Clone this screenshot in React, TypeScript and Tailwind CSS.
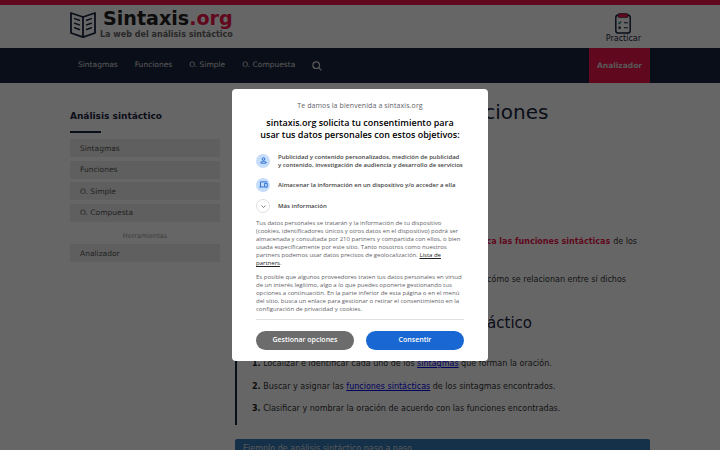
import { ReactNode } from 'react'

const navItems = ['Sintagmas', 'Funciones', 'O. Simple', 'O. Compuesta']

const BookLogo = () => (
  <svg className="h-[26px] w-[26px]" viewBox="0 0 26 26" fill="none" stroke="#1b2540" strokeWidth="1.8" strokeLinejoin="round">
    <path d="M13 5 1 1v20l12 4.200L25 21V1z" />
    <path d="M13 5v20" />
    <path d="m4.600 6.600 4.800 1.700M4.600 11.200l4.800 1.700M4.600 15.800l4.800 1.700M21.400 6.600l-4.800 1.700M21.400 11.200l-4.800 1.700M21.400 15.800l-4.800 1.700" strokeLinecap="round" strokeWidth="1.500" />
  </svg>
)

const ClipboardIcon = () => (
  <svg className="h-[21px] w-[16px]" viewBox="0 0 16 21" fill="none">
    <rect x="0.8" y="2" width="14.400" height="18" rx="2.600" stroke="#1b2540" strokeWidth="1.500" />
    <rect x="3" y="0.600" width="10" height="4" rx="1.300" fill="#f0144b" stroke="#1b2540" strokeWidth="0.700" />
    <path d="m3.400 9.600 1.100 1 1.700-2.200" stroke="#0f766e" strokeWidth="1.200" />
    <path d="M9 9.700h4M9 14.700h4" stroke="#1b2540" strokeWidth="1.100" />
    <rect x="3.500" y="13.500" width="2.200" height="2.400" fill="#1b2540" />
  </svg>
)

const Header = () => (
  <header>
    <div className="h-[5px] bg-[#f0144b]" />
    <div className="mx-auto flex h-[43px] w-[580px] justify-between">
      <div className="flex">
        <div className="pt-[7px]">
          <BookLogo />
        </div>
        <div className="ml-[4px] pt-[3px] whitespace-nowrap">
          <div className="pl-[3px] text-[19.100px] leading-[21px] font-bold text-[#222]">
            Sintaxis<span className="text-[#f0144b]">.org</span>
          </div>
          <div className="text-[8px] leading-[11px] font-bold tracking-[0.02px] text-[#666]">La web del análisis sintáctico</div>
        </div>
      </div>
      <div className="mr-[9px] flex flex-col items-center pt-[8px]">
        <ClipboardIcon />
        <span className="text-[8px] leading-[10px] text-[#1b2540]">Practicar</span>
      </div>
    </div>
    <nav className="h-[35px] bg-[#1b2540]">
      <div className="mx-auto flex h-full w-[580px] items-center justify-between">
        <div className="flex items-center gap-[17px] pl-[8px] text-[7.500px] text-[#ddd]">
          {navItems.map((item) => (
            <a key={item} className="pb-[2px]">
              {item}
            </a>
          ))}
          <svg className="h-[10px] w-[10px]" viewBox="0 0 10 10" fill="none" stroke="#ddd" strokeWidth="1.200">
            <circle cx="4.200" cy="4.200" r="3.300" />
            <path d="m6.600 6.600 2.800 2.800" />
          </svg>
        </div>
        <div className="flex h-full w-[61px] items-center justify-center bg-[#f0144b] text-[7.500px] font-bold text-[#ddd]">
          Analizador
        </div>
      </div>
    </nav>
  </header>
)

const SideLink = ({ children }: { children: ReactNode }) => (
  <a className="flex h-[18px] items-center bg-[#ededed] pt-[1px] pl-[10px] text-[7.500px] text-[#555]">{children}</a>
)

const Sidebar = () => (
  <aside className="w-[150px] pt-[27px]">
    <h3 className="text-[9px] leading-[12px] font-bold text-[#1b2540]">Análisis sintáctico</h3>
    <div className="mt-[9px] h-[1.500px] w-[31px] bg-[#1b2540]" />
    <div className="mt-[6.500px] flex flex-col gap-[3.500px]">
      {navItems.map((item) => (
        <SideLink key={item}>{item}</SideLink>
      ))}
    </div>
    <div className="mt-[9.500px] mb-[3px] text-center text-[6.500px] leading-[10px] text-[#999]">Herramientas</div>
    <SideLink>Analizador</SideLink>
  </aside>
)

const Content = () => (
  <main className="w-[415px] pt-[15px] text-[8px] whitespace-nowrap text-[#333]">
    <h1 className="w-[313px] text-right text-[20px] leading-[28px] text-[#1b2540]">Análisis sintáctico de oraciones</h1>
    <p className="mt-[107px] flex h-[18px] w-[402px] items-center justify-end">
      <strong className="mr-[3px] text-[#f0144b]">identifica las funciones sintácticas</strong> de los
    </p>
    <p className="mt-[20px] flex h-[18px] w-[391px] items-center justify-end">y cómo se relacionan entre sí dichos</p>
    <h2 className="mt-[24px] w-[297px] text-right text-[15px] leading-[20px] text-[#1b2540]">Cómo hacer un análisis sintáctico</h2>
    <ol className="mt-[12px] flex h-[80px] flex-col gap-[4.500px] border-l-2 border-[#1b2540] pt-[10px] pl-[15px]">
      <li className="h-[18px] leading-[18px]">
        <b className="text-[#222]">1.</b> Localizar e identificar cada uno de los <a className="text-[#0000ee] underline">sintagmas</a> que forman la oración.
      </li>
      <li className="h-[18px] leading-[18px]">
        <b className="text-[#222]">2.</b> Buscar y asignar las <a className="text-[#0000ee] underline">funciones sintácticas</a> de los sintagmas encontrados.
      </li>
      <li className="h-[18px] leading-[18px]">
        <b className="text-[#222]">3.</b> Clasificar y nombrar la oración de acuerdo con las funciones encontradas.
      </li>
    </ol>
    <div className="mt-[13.500px] h-[30px] rounded-t-[2px] bg-[#337ab7] px-[8px] pt-[4px] text-[8px] leading-[12px] text-[#ddd]">
      Ejemplo de análisis sintáctico paso a paso
    </div>
  </main>
)

const PurposeIcon = ({ children }: { children: ReactNode }) => (
  <span className="mb-[1px] flex h-[14px] w-[14px] shrink-0 items-center justify-center rounded-full bg-[#c6dcfb]">
    <svg className="h-[9px] w-[9px]" viewBox="0 0 24 24" fill="none" stroke="#1967d2" strokeWidth="2.400">
      {children}
    </svg>
  </span>
)

const ConsentDialog = () => (
  <div className="h-[272px] w-[256px] rounded-[4px] bg-white px-[24px] pt-[13px] font-['Open_Sans',sans-serif] whitespace-nowrap">
    <p className="text-center text-[7px] leading-[8px] font-medium tracking-[0.100px] text-[#5f6368]">Te damos la bienvenida a sintaxis.org</p>
    <h2 className="mt-[7px] text-center text-[9px] leading-[12px] font-semibold text-black">
      sintaxis.org solicita tu consentimiento para
      <br />
      usar tus datos personales con estos objetivos:
    </h2>
    <div className="mt-[12px] flex h-[16px] items-center gap-[8px] text-[6px] leading-[8px] font-semibold text-[#444]">
      <PurposeIcon>
        <circle cx="12" cy="8" r="3.500" />
        <path d="M5 19v-1.500c0-2.500 4-3.500 7-3.500s7 1 7 3.500V19z" />
      </PurposeIcon>
      <p>
        Publicidad y contenido personalizados, medición de publicidad
        <br />
        y contenido, investigación de audiencia y desarrollo de servicios
      </p>
    </div>
    <div className="mt-[8px] flex h-[16px] items-center gap-[8px] text-[6px] leading-[8px] font-semibold text-[#444]">
      <PurposeIcon>
        <path d="M22 5H4v13M1 18.500h12M15 9h7v10h-7z" />
      </PurposeIcon>
      <p>Almacenar la información en un dispositivo y/o acceder a ella</p>
    </div>
    <div className="mt-[6px] flex h-[14px] items-center gap-[8px] text-[6px] leading-[8px] font-semibold text-[#444]">
      <span className="flex h-[14px] w-[14px] items-center justify-center rounded-full border border-[#e0e0e0]">
        <svg className="h-[5px] w-[5px]" viewBox="0 0 5 5" fill="none" stroke="#5f6368" strokeWidth="0.800">
          <path d="m0.500 1.500 2 2 2-2" />
        </svg>
      </span>
      <p>Más información</p>
    </div>
    <div className="mt-[6px] flex flex-col gap-[6px] text-[6px] leading-[8px] text-[#5f6368]">
      <p>
        Tus datos personales se tratarán y la información de tu dispositivo
        <br />
        (cookies, identificadores únicos y otros datos en el dispositivo) podrá ser
        <br />
        almacenada y consultada por 210 partners y compartida con ellos, o bien
        <br />
        usada específicamente por este sitio. Tanto nosotros como nuestros
        <br />
        partners podemos usar datos precisos de geolocalización.{' '}
        <a className="font-medium text-[#222] underline">
          Lista de
          <br />
          partners
        </a>
        .
      </p>
      <p>
        Es posible que algunos proveedores traten tus datos personales en virtud
        <br />
        de un interés legítimo, algo a lo que puedes oponerte gestionando tus
        <br />
        opciones a continuación. En la parte inferior de esta página o en el menú
        <br />
        del sitio, busca un enlace para gestionar o retirar el consentimiento en la
        <br />
        configuración de privacidad y cookies.
      </p>
    </div>
    <div className="mt-[6px] flex gap-[12px] border-t border-[#e0e0e0] pt-[11px] text-[7px] font-semibold text-white">
      <button className="h-[19px] flex-1 rounded-full bg-[#6c6c6c]">Gestionar opciones</button>
      <button className="h-[19px] flex-1 rounded-full bg-[#1967d2]">Consentir</button>
    </div>
  </div>
)

export default function App() {
  return (
    <div className="relative h-[450px] w-[720px] overflow-hidden bg-white font-['DejaVu_Sans',sans-serif]">
      <Header />
      <div className="mx-auto flex w-[580px] justify-between">
        <Sidebar />
        <Content />
      </div>
      <div className="absolute inset-0 flex items-center justify-center bg-black/60">
        <ConsentDialog />
      </div>
    </div>
  )
}
